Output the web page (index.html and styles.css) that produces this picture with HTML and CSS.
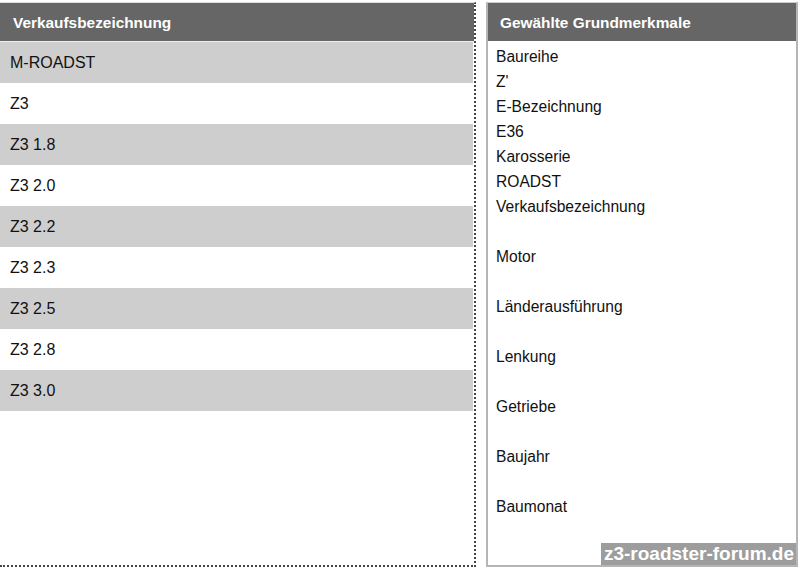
FILE: index.html
```html
<!DOCTYPE html>
<html lang="de">
<head>
<meta charset="utf-8">
<title>Auswahl</title>
<link rel="stylesheet" href="styles.css">
</head>
<body>
<div class="page">
  <div class="panel-left">
    <div class="head">Verkaufsbezeichnung</div>
    <ul class="rows">
      <li class="row alt">M-ROADST</li>
      <li class="row">Z3</li>
      <li class="row alt">Z3 1.8</li>
      <li class="row">Z3 2.0</li>
      <li class="row alt">Z3 2.2</li>
      <li class="row">Z3 2.3</li>
      <li class="row alt">Z3 2.5</li>
      <li class="row">Z3 2.8</li>
      <li class="row alt">Z3 3.0</li>
    </ul>
  </div>
  <div class="panel-right">
    <div class="head head-r">Gewählte Grundmerkmale</div>
    <dl class="props">
      <dt>Baureihe</dt><dd>Z'</dd>
      <dt>E-Bezeichnung</dt><dd>E36</dd>
      <dt>Karosserie</dt><dd>ROADST</dd>
      <dt>Verkaufsbezeichnung</dt><dd></dd>
      <dt>Motor</dt><dd></dd>
      <dt>Länderausführung</dt><dd></dd>
      <dt>Lenkung</dt><dd></dd>
      <dt>Getriebe</dt><dd></dd>
      <dt>Baujahr</dt><dd></dd>
      <dt>Baumonat</dt><dd></dd>
    </dl>
    <div class="watermark">z3-roadster-forum.de</div>
  </div>
</div>
</body>
</html>
```

FILE: styles.css
```css
html, body {
  margin: 0;
  padding: 0;
  background: #fff;
}
body {
  font-family: "Liberation Sans", Arial, sans-serif;
  color: #111;
}
.page {
  display: flex;
  gap: 10px;
  width: 800px;
  height: 568px;
  padding-top: 2px;
  box-sizing: border-box;
}
.panel-left {
  width: 476px;
  height: 565px;
  box-sizing: border-box;
  border-right: 2px dotted #444;
  border-bottom: 2px dotted #444;
  border-top: 1px solid #ddd;
  display: flex;
  flex-direction: column;
}
.head {
  height: 38px;
  line-height: 39px;
  background: #666;
  color: #fff;
  font-weight: bold;
  font-size: 15.4px;
  padding-left: 13px;
  border-bottom: 1px solid #eee;
}
.rows {
  list-style: none;
  margin: 0;
  padding: 0 1px 0 0;
}
.row {
  height: 41px;
  line-height: 41px;
  padding-left: 10px;
  font-size: 16px;
}
.row.alt {
  background: #cecece;
}
.panel-right {
  position: relative;
  width: 312px;
  height: 565px;
  box-sizing: border-box;
  border: 2px solid #b5b5b5;
  border-top-width: 1px;
  border-top-color: #ccc;
  display: flex;
  flex-direction: column;
}
.head-r {
  padding-left: 12px;
  border-bottom: none;
}
.props {
  margin: 0;
  padding: 3px 0 0 8px;
  font-size: 15.6px;
}
.props dt,
.props dd {
  margin: 0;
  height: 25px;
  line-height: 25px;
}
.watermark {
  position: absolute;
  right: 0;
  bottom: 0;
  background: rgba(140, 140, 140, 0.85);
  color: #fff;
  font-weight: bold;
  font-size: 19px;
  line-height: 22px;
  padding: 0 2px 0 3px;
}
```
